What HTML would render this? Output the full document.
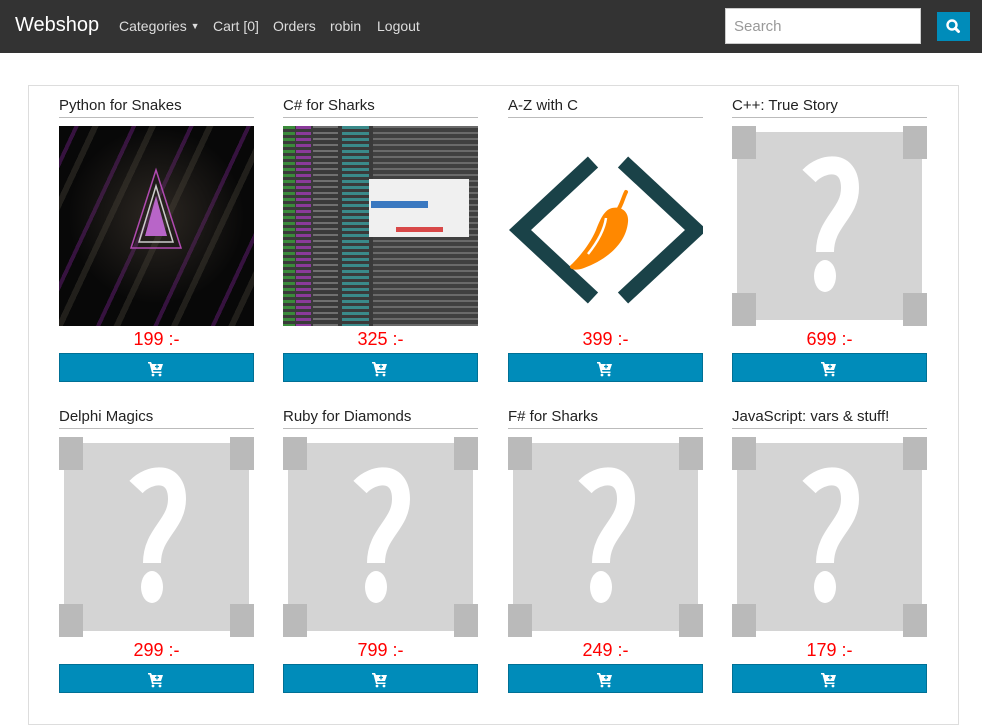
<!DOCTYPE html>
<html><head><meta charset="utf-8"><style>
*{box-sizing:border-box;margin:0;padding:0}
body{width:982px;height:713px;overflow:hidden;background:#fff;font-family:"Liberation Sans",sans-serif;position:relative}
.nav{position:absolute;left:0;top:0;width:982px;height:53px;background:#333}
.nav .brand{position:absolute;left:15px;top:14px;color:#fff;font-size:20px}
.nav .l{position:absolute;top:18px;color:#ddd;font-size:14px}
.search{position:absolute;left:725px;top:8px;width:196px;height:36px;background:#fff;border:1px solid #ccc;color:#999;font-size:15px;padding:9px 8px}
.sbtn{position:absolute;left:937px;top:12px;width:33px;height:29px;background:#008cba}
.box{position:absolute;left:28px;top:85px;width:931px;height:640px;border:1px solid #ddd}
.card{position:absolute;width:195px}
.card .t{font-size:15px;color:#222;line-height:20px;border-bottom:1px solid #bbb;height:22px}
.card .img{position:absolute;top:30px;left:0;width:195px;height:200px;overflow:hidden}
.card .p{position:absolute;top:233px;width:195px;text-align:center;color:#f00;font-size:18px}
.card .b{position:absolute;top:257px;left:0;width:195px;height:29px;background:#008cba;border:1px solid #007095}
.ph{background:#fff}
.ph .f{position:absolute;left:5px;top:6px;width:185px;height:188px;background:#d4d4d4}
.ph .c{position:absolute;width:24px;height:33px;background:#bababa}
.ph svg{position:absolute;left:0;top:0}
</style></head><body>
<div class="nav">
<div class="brand">Webshop</div>
<div class="l" style="left:119px">Categories <span style="font-size:9px;vertical-align:2px">▼</span></div>
<div class="l" style="left:213px">Cart [0]</div>
<div class="l" style="left:273px">Orders</div>
<div class="l" style="left:330px">robin</div>
<div class="l" style="left:377px">Logout</div>
<div class="search">Search</div>
<div class="sbtn"><svg width="33" height="29" viewBox="0 0 33 29"><circle cx="15" cy="13" r="4.5" fill="none" stroke="#fff" stroke-width="2.4"/><line x1="18.3" y1="16.3" x2="21.5" y2="19.5" stroke="#fff" stroke-width="3" stroke-linecap="round"/></svg></div>
</div>
<div class="box"></div>

<div class="card" style="left:59px;top:96px"><div class="t">Python for Snakes</div>
<div class="img" style="background:#080808">
<div style="position:absolute;inset:0;background:repeating-linear-gradient(115deg,transparent 0 14px,rgba(110,30,130,.45) 14px 18px,transparent 18px 30px,rgba(90,85,70,.3) 30px 36px,transparent 36px 52px)"></div>
<div style="position:absolute;inset:0;background:radial-gradient(circle at 50% 45%,rgba(80,70,60,.5),transparent 60%)"></div>
<svg style="position:absolute;left:0;top:0" width="195" height="200"><polygon points="97,44 72,122 122,122" fill="none" stroke="#b04ab0" stroke-width="1.5"/><polygon points="97,60 80,116 114,116" fill="none" stroke="#ccc" stroke-width="1.5"/><polygon points="97,70 86,110 108,110" fill="#b865c8"/></svg>
</div>
<div class="p">199 :-</div><div class="b"><svg width="193" height="27"><g fill="#fff"><path d="M88 8h3l1 2h11l-2 6h-8l.5 1.5h8v1.5h-9.5l-2.5-9.5h-1.5z"/><circle cx="93" cy="21" r="1.4"/><circle cx="100" cy="21" r="1.4"/></g><path d="M97 10.5v4M95 12.5h4" stroke="#008cba" stroke-width="1.3"/></svg></div></div>

<div class="card" style="left:283px;top:96px"><div class="t">C# for Sharks</div>
<div class="img" style="background:#3a3a3a">
<div style="position:absolute;left:0;top:0;width:12px;height:200px;background:repeating-linear-gradient(#3a8a3a 0 3px,#3a3a3a 3px 6px)"></div>
<div style="position:absolute;left:13px;top:0;width:15px;height:200px;background:repeating-linear-gradient(#8a3a9a 0 3px,#3a3a3a 3px 6px)"></div>
<div style="position:absolute;left:30px;top:0;width:25px;height:200px;background:repeating-linear-gradient(#707070 0 2px,#3a3a3a 2px 6px)"></div>
<div style="position:absolute;left:59px;top:0;width:27px;height:200px;background:repeating-linear-gradient(#3a8a8a 0 3px,#3a3a3a 3px 6px)"></div>
<div style="position:absolute;left:90px;top:0;width:105px;height:200px;background:repeating-linear-gradient(#6a6a6a 0 2px,#404040 2px 6px)"></div>
<div style="position:absolute;left:86px;top:53px;width:100px;height:58px;background:#f0f0f0"><div style="position:absolute;left:2px;top:22px;width:57px;height:7px;background:#3a78c0"></div><div style="position:absolute;left:27px;top:48px;width:47px;height:5px;background:#d84848"></div></div>
</div>
<div class="p">325 :-</div><div class="b"><svg width="193" height="27"><g fill="#fff"><path d="M88 8h3l1 2h11l-2 6h-8l.5 1.5h8v1.5h-9.5l-2.5-9.5h-1.5z"/><circle cx="93" cy="21" r="1.4"/><circle cx="100" cy="21" r="1.4"/></g><path d="M97 10.5v4M95 12.5h4" stroke="#008cba" stroke-width="1.3"/></svg></div></div>

<div class="card" style="left:508px;top:96px"><div class="t">A-Z with C</div>
<div class="img" style="background:#fff"><svg width="195" height="200"><g fill="none" stroke="#1a4248" stroke-width="15"><polyline points="85,36 12,104 85,172"/><polyline points="115,36 188,104 115,172"/></g><path d="M64,138 C58,142 66,146 76,142 C98,134 118,118 120,96 C121,86 114,80 104,82 C96,84 92,94 88,104 C82,118 72,130 64,138z" fill="#ff8800"/><path d="M110,84 C114,78 115,72 118,66" stroke="#ff8800" stroke-width="4" fill="none" stroke-linecap="round"/><path d="M98,92 C96,106 88,118 80,128" stroke="#fff" stroke-width="2.5" fill="none"/></svg></div>
<div class="p">399 :-</div><div class="b"><svg width="193" height="27"><g fill="#fff"><path d="M88 8h3l1 2h11l-2 6h-8l.5 1.5h8v1.5h-9.5l-2.5-9.5h-1.5z"/><circle cx="93" cy="21" r="1.4"/><circle cx="100" cy="21" r="1.4"/></g><path d="M97 10.5v4M95 12.5h4" stroke="#008cba" stroke-width="1.3"/></svg></div></div>

<div class="card" style="left:732px;top:96px"><div class="t">C++: True Story</div>
<div class="img ph"><div class="f"></div><div class="c" style="left:0;top:0"></div><div class="c" style="right:0;top:0"></div><div class="c" style="left:0;bottom:0"></div><div class="c" style="right:0;bottom:0"></div><svg width="195" height="200"><path d="M77,50 C90,36 118,32 118,62 C118,88 93,96 93,126" fill="none" stroke="#fff" stroke-width="18"/><ellipse cx="93" cy="150" rx="11" ry="16" fill="#fff"/></svg></div>
<div class="p">699 :-</div><div class="b"><svg width="193" height="27"><g fill="#fff"><path d="M88 8h3l1 2h11l-2 6h-8l.5 1.5h8v1.5h-9.5l-2.5-9.5h-1.5z"/><circle cx="93" cy="21" r="1.4"/><circle cx="100" cy="21" r="1.4"/></g><path d="M97 10.5v4M95 12.5h4" stroke="#008cba" stroke-width="1.3"/></svg></div></div>

<div class="card" style="left:59px;top:407px"><div class="t">Delphi Magics</div>
<div class="img ph"><div class="f"></div><div class="c" style="left:0;top:0"></div><div class="c" style="right:0;top:0"></div><div class="c" style="left:0;bottom:0"></div><div class="c" style="right:0;bottom:0"></div><svg width="195" height="200"><path d="M77,50 C90,36 118,32 118,62 C118,88 93,96 93,126" fill="none" stroke="#fff" stroke-width="18"/><ellipse cx="93" cy="150" rx="11" ry="16" fill="#fff"/></svg></div>
<div class="p">299 :-</div><div class="b"><svg width="193" height="27"><g fill="#fff"><path d="M88 8h3l1 2h11l-2 6h-8l.5 1.5h8v1.5h-9.5l-2.5-9.5h-1.5z"/><circle cx="93" cy="21" r="1.4"/><circle cx="100" cy="21" r="1.4"/></g><path d="M97 10.5v4M95 12.5h4" stroke="#008cba" stroke-width="1.3"/></svg></div></div>

<div class="card" style="left:283px;top:407px"><div class="t">Ruby for Diamonds</div>
<div class="img ph"><div class="f"></div><div class="c" style="left:0;top:0"></div><div class="c" style="right:0;top:0"></div><div class="c" style="left:0;bottom:0"></div><div class="c" style="right:0;bottom:0"></div><svg width="195" height="200"><path d="M77,50 C90,36 118,32 118,62 C118,88 93,96 93,126" fill="none" stroke="#fff" stroke-width="18"/><ellipse cx="93" cy="150" rx="11" ry="16" fill="#fff"/></svg></div>
<div class="p">799 :-</div><div class="b"><svg width="193" height="27"><g fill="#fff"><path d="M88 8h3l1 2h11l-2 6h-8l.5 1.5h8v1.5h-9.5l-2.5-9.5h-1.5z"/><circle cx="93" cy="21" r="1.4"/><circle cx="100" cy="21" r="1.4"/></g><path d="M97 10.5v4M95 12.5h4" stroke="#008cba" stroke-width="1.3"/></svg></div></div>

<div class="card" style="left:508px;top:407px"><div class="t">F# for Sharks</div>
<div class="img ph"><div class="f"></div><div class="c" style="left:0;top:0"></div><div class="c" style="right:0;top:0"></div><div class="c" style="left:0;bottom:0"></div><div class="c" style="right:0;bottom:0"></div><svg width="195" height="200"><path d="M77,50 C90,36 118,32 118,62 C118,88 93,96 93,126" fill="none" stroke="#fff" stroke-width="18"/><ellipse cx="93" cy="150" rx="11" ry="16" fill="#fff"/></svg></div>
<div class="p">249 :-</div><div class="b"><svg width="193" height="27"><g fill="#fff"><path d="M88 8h3l1 2h11l-2 6h-8l.5 1.5h8v1.5h-9.5l-2.5-9.5h-1.5z"/><circle cx="93" cy="21" r="1.4"/><circle cx="100" cy="21" r="1.4"/></g><path d="M97 10.5v4M95 12.5h4" stroke="#008cba" stroke-width="1.3"/></svg></div></div>

<div class="card" style="left:732px;top:407px"><div class="t">JavaScript: vars &amp; stuff!</div>
<div class="img ph"><div class="f"></div><div class="c" style="left:0;top:0"></div><div class="c" style="right:0;top:0"></div><div class="c" style="left:0;bottom:0"></div><div class="c" style="right:0;bottom:0"></div><svg width="195" height="200"><path d="M77,50 C90,36 118,32 118,62 C118,88 93,96 93,126" fill="none" stroke="#fff" stroke-width="18"/><ellipse cx="93" cy="150" rx="11" ry="16" fill="#fff"/></svg></div>
<div class="p">179 :-</div><div class="b"><svg width="193" height="27"><g fill="#fff"><path d="M88 8h3l1 2h11l-2 6h-8l.5 1.5h8v1.5h-9.5l-2.5-9.5h-1.5z"/><circle cx="93" cy="21" r="1.4"/><circle cx="100" cy="21" r="1.4"/></g><path d="M97 10.5v4M95 12.5h4" stroke="#008cba" stroke-width="1.3"/></svg></div></div>
</body></html>
